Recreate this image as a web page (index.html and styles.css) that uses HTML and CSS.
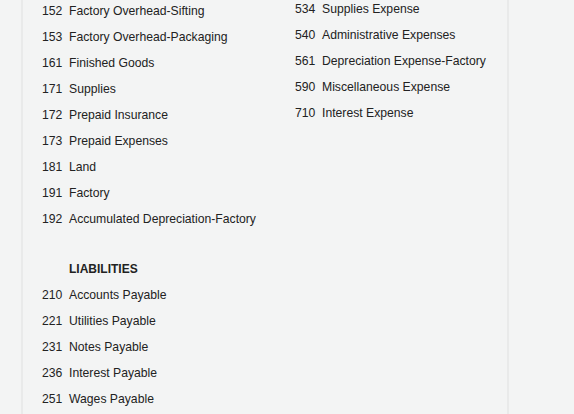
FILE: index.html
```html
<!DOCTYPE html>
<html>
<head>
<meta charset="utf-8">
<link rel="stylesheet" href="styles.css">
</head>
<body>
<div class="panel">
  <div class="cols">
    <div class="col col-left">
      <ul class="list">
        <li class="row"><span class="num">152</span><span class="name">Factory Overhead-Sifting</span></li>
        <li class="row"><span class="num">153</span><span class="name">Factory Overhead-Packaging</span></li>
        <li class="row"><span class="num">161</span><span class="name">Finished Goods</span></li>
        <li class="row"><span class="num">171</span><span class="name">Supplies</span></li>
        <li class="row"><span class="num">172</span><span class="name">Prepaid Insurance</span></li>
        <li class="row"><span class="num">173</span><span class="name">Prepaid Expenses</span></li>
        <li class="row"><span class="num">181</span><span class="name">Land</span></li>
        <li class="row"><span class="num">191</span><span class="name">Factory</span></li>
        <li class="row"><span class="num">192</span><span class="name">Accumulated Depreciation-Factory</span></li>
      </ul>
      <h3 class="heading">LIABILITIES</h3>
      <ul class="list">
        <li class="row"><span class="num">210</span><span class="name">Accounts Payable</span></li>
        <li class="row"><span class="num">221</span><span class="name">Utilities Payable</span></li>
        <li class="row"><span class="num">231</span><span class="name">Notes Payable</span></li>
        <li class="row"><span class="num">236</span><span class="name">Interest Payable</span></li>
        <li class="row"><span class="num">251</span><span class="name">Wages Payable</span></li>
      </ul>
    </div>
    <div class="col col-right">
      <ul class="list">
        <li class="row"><span class="num">534</span><span class="name">Supplies Expense</span></li>
        <li class="row"><span class="num">540</span><span class="name">Administrative Expenses</span></li>
        <li class="row"><span class="num">561</span><span class="name">Depreciation Expense-Factory</span></li>
        <li class="row"><span class="num">590</span><span class="name">Miscellaneous Expense</span></li>
        <li class="row"><span class="num">710</span><span class="name">Interest Expense</span></li>
      </ul>
    </div>
  </div>
</div>
</body>
</html>
```

FILE: styles.css
```css
html, body {
  margin: 0;
  padding: 0;
  background: #f3f4f4;
  font-family: "Liberation Sans", Arial, sans-serif;
  font-size: 12.2px;
  color: #222;
  overflow: hidden;
}
.panel {
  margin-left: 21px;
  width: 484px;
  height: 414px;
  border-left: 2px solid #e9eaea;
  border-right: 2px solid #e9eaea;
  background: #f3f4f4;
  box-sizing: content-box;
}
.cols {
  display: grid;
  grid-template-columns: 253px 1fr;
  padding-left: 19px;
}
.col-left {
  padding-top: 1px;
}
.col-right {
  margin-top: -1px;
}
.list {
  list-style: none;
  margin: 0;
  padding: 0;
  display: flex;
  flex-direction: column;
  gap: 6px;
}
.row {
  display: flex;
  height: 20px;
  line-height: 20px;
  white-space: nowrap;
}
.num {
  width: 20px;
  margin-right: 7px;
  text-align: right;
}
.heading {
  margin: 30px 0 6px 27px;
  height: 20px;
  line-height: 20px;
  font-size: 12px;
  font-weight: bold;
}
```
